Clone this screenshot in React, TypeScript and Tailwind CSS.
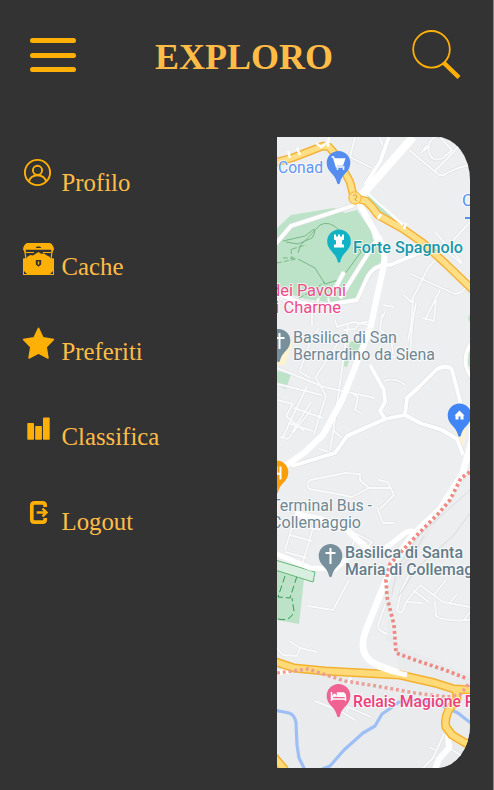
import React from "react";

const ACCENT = "#ffb006";

function ProfileIcon() {
  return (
    <svg viewBox="22 157 32 32" className="size-8" fill="none" stroke={ACCENT} strokeWidth="1.900">
      <circle cx="37.500" cy="172.500" r="12.600" />
      <circle cx="37.500" cy="170.300" r="4.600" />
      <path d="M29 181.500C29.500 178 33 175.200 37.500 175.200S45.500 178 46 181.500" />
    </svg>
  );
}

function ChestIcon() {
  return (
    <svg viewBox="22 241 32 36" className="h-9 w-8">
      <path fill={ACCENT} d="M27 242H50Q53.500 243.500 54 248.500L52 251.500H25L23 248.500Q23.500 243.500 27 242ZM23 257.500L26 257H51L54 257.500V274H23Z" />
      <path fill="#333" d="M35.500 247L37 245.500H40L41.500 247ZM25.500 248.800H51.500L50.500 257.800H26.500Z" />
      <path fill="none" stroke={ACCENT} strokeWidth="1.200" d="M24.500 248L26 258M52.500 248L51 258M26 251.500H34M43 251.500H51" />
      <path fill={ACCENT} d="M27 258V256L30.500 254L33 254.500L36 252.500L38.500 251L41 252.800L44 252.500L47 254.500L50 256V258Z" />
      <path fill="#333" d="M35.800 259H41.200V263.500L38.500 265.800L35.800 263.500ZM24 273V270L27 273ZM53 273V270L50 273Z" />
      <path fill={ACCENT} d="M37.800 260.500H39.200V263.500H37.800Z" />
    </svg>
  );
}

function StarIcon() {
  return (
    <svg viewBox="22 326 34 34" className="h-[34px] w-[34px]">
      <path fill={ACCENT} stroke={ACCENT} strokeWidth="1.500" strokeLinejoin="round" d="M38.500 328.200L43 337.800L53.500 339.500L46.200 347L48 358L38.500 353L29 358L30.800 347L23.500 339.500L34 337.800Z" />
    </svg>
  );
}

function ChartIcon() {
  return (
    <svg viewBox="22 411 32 32" className="size-8" fill={ACCENT}>
      <rect x="27.300" y="423" width="6.700" height="16.800" rx=".8" />
      <rect x="35.200" y="426" width="6.700" height="13.800" rx=".8" />
      <rect x="43" y="417.500" width="6.700" height="22.300" rx=".8" />
    </svg>
  );
}

function LogoutIcon() {
  return (
    <svg viewBox="22 496 32 32" className="size-8" fill="none" stroke={ACCENT}>
      <path strokeWidth="3.700" d="M45.200 507V505.500Q45.200 502.800 42.500 502.800H34.500Q31.800 502.800 31.800 505.500V519.500Q31.800 522.200 34.500 522.200H42.500Q45.200 522.200 45.200 519.500V518" />
      <path strokeWidth="2.400" d="M36.700 512.500H46.500M42.500 508.500L46.500 512.500L42.500 516.500" />
    </svg>
  );
}

const menu = [
  { label: "Profilo", icon: <ProfileIcon />, offset: "mt-[11px]" },
  { label: "Cache", icon: <ChestIcon />, offset: "mt-[10px]" },
  { label: "Preferiti", icon: <StarIcon />, offset: "mt-[11px]" },
  { label: "Classifica", icon: <ChartIcon />, offset: "mt-[11px]" },
  { label: "Logout", icon: <LogoutIcon />, offset: "mt-[11px]" },
];

const minorRoads = [
  "M277 296L300 312M319 298L312 312L312 325",
  "M319 328L311 340L300 370M335 320L337 327L353 322L369 325M328 298L333 315",
  "M344 330L355 329L360 323L371 321M315 378L342 337M348 325L339 390L334 426L330 450M277 368L324 387L375 398",
  "M316 378L326 396L322 408L314 434M277 384L322 395M299 371L310 378",
  "M277 400L293 404L286 416L304 431M294 408L323 418M288 423L313 431M353 394L358 397L355 410L361 413",
  "M307 386L283 437M311 402L292 432M280 437L288 439L311 410",
  "M355 137L350 157L372 168",
  "M379 137L384 148M382 314L380 330L391 337L393 353",
  "M389 357L410 357L412 325L416 303M385 312L382 318",
  "M409 150L438 174Q442 177 447 173L458 168L470 165M421 153L427 145M434 172L462 143M429 146L424 151",
  "M435 137Q427 142 429 152Q432 163 443 158L452 150L440 137",
  "M411 274L455 294L462 292L470 282M428 268L411 302L404 295",
  "M413 300L411 325L408 341M428 268L470 222",
  "M440 290L430 310L425 320M436 300L434 321L423 318",
  "M438 244L462 264M435 232L462 262",
  "M383 305L394 307M384 381Q396 377 405 385",
  "M307 484L310 480L335 475L345 473L360 474L360 480L369 488L352 497L332 493L309 489L307 484M378 480L388 482L394 495L380 509M369 488L390 488",
  "M333 430L343 439M319 449L329 452",
  "M285 550L293 524L320 530M285 552L307 558M290 535L312 541M313 528L303 562",
  "M355 534L353 544L341 566M355 533L372 542L363 554M377 507L383 523L394 523",
  "M413 567L401 591L397 610Q402 618 406 602L420 585M420 585L443 602L470 607M407 602L422 603",
  "M434 595L446 580M435 602L436 616Q446 622 470 620M449 604L457 594M413 590L430 603M464 620L470 612",
  "M277 648L283 655L297 656L300 648L317 652M300 648L289 641",
  "M349 580L333 610L308 606M385 605L378 625Q378 632 388 634",
  "M350 684L351 678M315 701L340 711L355 720M347 712L348 707L371 717M351 675L348 684",
  "M444 734L433 758L423 768M429 747L435 750M449 748L462 756",
];

const mainRoads = [
  "M272 248L291 226L352 206L360 198M371 222L376 241L340 298M344 272L331 296",
  "M277 294L300 302L320 306L357 300L367 278Q374 264 390 265L412 256L430 249",
  "M365 185L380 162L389 137",
  "M292 466L335 453L347 436L385 419L405 415L420 423L442 430L457 439L463 455",
  "M385 419L380 411L385 402L384 390L370 365",
  "M405 415L407 398L419 387L437 369Q448 364 452 370L461 405",
  "M482 335Q463 345 466 366Q468 376 480 386",
];

interface PinProps {
  x: number;
  y: number;
  color: string;
  children?: React.ReactNode;
}

function Pin({ x, y, color, children }: PinProps) {
  return (
    <g transform={`translate(${x} ${y})`}>
      <path d="M0 -12A11.800 11.800 0 0 1 11.800 0C11.800 9 3 11 1.400 20Q0 22.500 -1.400 20C-3 11 -11.800 9 -11.800 0A11.800 11.800 0 0 1 0 -12Z" fill={color} />
      {children}
    </g>
  );
}

interface LabelProps {
  x: number;
  y: number;
  width: number;
  color: string;
  weight?: string;
  children: string;
}

function Label({ x, y, width, color, weight = "font-normal", children }: LabelProps) {
  return (
    <text x={x} y={y} textLength={width} lengthAdjust="spacingAndGlyphs" fill={color} stroke="#ffffff" strokeOpacity=".7" strokeWidth="2" strokeLinejoin="round" paintOrder="stroke" className={`text-[16px] ${weight}`}>
      {children}
    </text>
  );
}

const yellowRoads = [
  "M273 163L292 158L323 146L329 147L335 154L350 182L354 198M354 198L366 201L372 207L378 215L403 229L423 243L446 264L473 290",
];

function CityMap() {
  return (
    <svg viewBox="277 137 193 631" className="block h-[631px] w-[193px] font-['Roboto',sans-serif]" fill="none">
      <rect x="277" y="137" width="193" height="631" fill="#edeef0" />
      <path d="M470 472L423 520L397 570L385 640L470 675V768H277V665L400 674L385 600Z" fill="#e9ebed" />
      <g fill="#bce2c7">
        <path d="M277 228L291 215L334 208L345 213L357 210L384 250Q384 264 370 271L358 299L337 303L305 299L277 290Z" />
        <path d="M350 342L362 339L364 350L350 357L347 367L343 366ZM277 371L291 374L286 389L277 385Z" />
        <path d="M277 563L306 572L304 579L299 624L277 620ZM308 577L315 579L314 582L307 581Z" />
        <path d="M365 190L380 202L397 220L375 214Z" />
        <path d="M470 347Q463 360 470 367ZM470 314L468 318L470 323Z" />
      </g>
      <path d="M277 345L293 343L285 365L277 365ZM457 430L466 427L464 446L455 437Z" fill="#fdf2d2" />

      <g stroke="#79b886" strokeWidth="1">
        <path d="M298 253L300 246L320 225Q329 220 339 230M298 259L315 268L325 284L341 279L361 252L354 240" />
        <path d="M283 241L305 236L314 229Q316 233 312 238L298 244L286 242" />
        <path d="M292 249L306 245M295 258L281 258M277 263L296 259M291 249L292 259" strokeDasharray="5 2" />
        <path d="M299 298L310 292L325 282" strokeDasharray="5 2" />
        <path d="M285 576L278 597L290 598L297 576M278 619Q291 622 294 611L292 598" stroke="#379b55" strokeDasharray="7 3" />
      </g>
      <path d="M272 559L315 572L313 582L272 569Z" fill="#d8efdf" stroke="#65b878" strokeWidth="1" />

      <g stroke="#dfe1e4" strokeWidth="3.200" strokeLinejoin="round">
        {minorRoads.map((d) => <path key={d} d={d} />)}
      </g>
      <g stroke="#f9fafb" strokeWidth="1.900" strokeLinejoin="round">
        {minorRoads.map((d) => <path key={d} d={d} />)}
      </g>
      <g stroke="#e0e2e4" strokeWidth="5" strokeLinejoin="round">
        {mainRoads.map((d) => <path key={d} d={d} />)}
      </g>
      <g stroke="#fff" strokeWidth="3.800" strokeLinejoin="round">
        {mainRoads.map((d) => <path key={d} d={d} />)}
      </g>
      <g stroke="#fff" strokeLinejoin="round">
        <path strokeWidth="8" d="M359 198L377 178L413 137" />
        <path strokeWidth="6" d="M357 199L376 234Q386 246 384 265L376 301L371 326L354 370L342 400L323 435L305 452L277 472" />
        <path strokeWidth="5" d="M277 554L310 568L335 569L349 557" />
        <path strokeWidth="6" d="M295 514L323 520L345 528L372 553" />
        <path strokeWidth="5" d="M380 552L391 544L405 533Q413 528 418 536" />
        <path strokeWidth="6.500" d="M472 405V440L462 475L440 509L413 535L395 560L382 590L366 630Q356 656 378 665L407 676" />
        <path strokeWidth="5" d="M277 673L290 671" />
        <path strokeWidth="6" d="M448 734L449 748L439 759L435 770" />
      </g>
      <g stroke="#dadcdf" strokeWidth="1">
        <path d="M470 490L440 517L420 534L397 568L392 594M470 513L454 535L418 567L398 597M398 569L413 555L424 536" />
      </g>

      <path stroke="#9dbff5" strokeWidth="3.200" strokeLinejoin="round" d="M274 710L289 713Q295 715 296 723L297 745L299 758L305 770M320 770L330 766L344 750L363 733L375 726L382 714L388 710L399 702L419 700L443 706L458 713L472 724" />

      <g strokeLinejoin="round">
        {yellowRoads.map((d) => <path key={d} d={d} stroke="#f3b33c" strokeWidth="8.500" />)}
        {yellowRoads.map((d) => <path key={d} d={d} stroke="#ffdf86" strokeWidth="5.500" />)}
        <path d="M273 661L294 668L325 671L400 675L435 683L454 689L475 690M456 688L457 700Q443 713 446 727L452 735L472 747M274 757L285 770" stroke="#f4b131" strokeWidth="9" />
        <path d="M273 661L294 668L325 671L400 675L435 683L454 689L475 690M456 688L457 700Q443 713 446 727L452 735L472 747M274 757L285 770" stroke="#ffda79" strokeWidth="6" />
        <circle cx="355" cy="198" r="6.200" fill="#ffdf86" stroke="#f8b42a" />
        <path d="M353 196Q356 193 357 197Q353 199 357 201" stroke="#d99a38" />
        <path d="M381 214L378 219M404 229L406 223" stroke="#fff" strokeWidth="2.500" />
        <path d="M378 667L390 671L407 675" stroke="#fff" strokeWidth="5" />
      </g>
      <path d="M365 191L403 225" stroke="#fff" strokeWidth="2.500" />
      <path d="M290 158L288 151M300 155L297 148M316 143L321 147L328 142M328 147L329 137" stroke="#fff" strokeWidth="2.300" />
      <path d="M470 472L461 478L450 500L438 514L421 531L402 551L390 564L386 580L387 597L394 625L396 653L415 660L445 670L468 679" stroke="#ed8a84" strokeWidth="3.700" strokeDasharray="3 2.800" />
      <path d="M277 673L308 669L345 681L382 687L415 693L447 697L460 695L470 682" stroke="#eaa097" strokeWidth="3.500" strokeDasharray="3 2.800" />

      <Pin x={338.500} y={163} color="#548cf0">
        <path d="M-7 -6H-5L-2 4H6M-4 -4H6L4 2H-3" stroke="#fff" strokeWidth="1.500" />
        <path d="M-4 -4H6L4 2H-3Z" fill="#fff" />
        <circle cx="-1" cy="6" r="1" fill="#fff" />
        <circle cx="5" cy="6" r="1" fill="#fff" />
      </Pin>
      <Pin x={339} y={241.500} color="#12b2c5">
        <path d="M-5 -7H-3V-5H-1V-7H1V-5H3V-7H5V-2L3 -1V3H5V6H-5V3H-3V-1L-5 -2Z" fill="#fff" />
      </Pin>
      <Pin x={278.500} y={341} color="#78909c">
        <path d="M1 -8V8M-4 -3H6" stroke="#fff" strokeWidth="2" />
      </Pin>
      <Pin x={459.500} y={415.500} color="#4285f4">
        <path d="M-5 0L0 -5L5 0H4V4H1V1H-1V4H-4V0Z" fill="#fff" />
      </Pin>
      <Pin x={276.500} y={472.500} color="#f99d0b">
        <path d="M0 -6V0Q0 2 4 1M4 -6V7" stroke="#fff" strokeWidth="2" />
      </Pin>
      <Pin x={330.500} y={556} color="#78909c">
        <path d="M0 -8V8M-5 -3H5" stroke="#fff" strokeWidth="2" />
      </Pin>
      <Pin x={338.500} y={696} color="#f06292">
        <path d="M-7 -4V5M-7 3H7V5M-1 0V-3H5Q7 -2 7 1V3H-6V0Z" stroke="#fff" strokeWidth="1.500" />
        <path d="M-1 -3H5Q7 -2 7 1H-1Z" fill="#fff" />
        <circle cx="-4" cy="-1" r="1.500" fill="#fff" />
      </Pin>
      <Label x={278} y={173} width={45} color="#5f97f2">Conad</Label>
      <Label x={353} y={252.500} width={110} color="#1998aa" weight="font-medium">Forte Spagnolo</Label>
      <Label x={271} y={295.500} width={75} color="#ec4c8b">dei Pavoni</Label>
      <Label x={266} y={312.500} width={75} color="#ec4c8b">di Charme</Label>
      <Label x={293} y={343} width={104} color="#6f8793">Basilica di San</Label>
      <Label x={293} y={360} width={142} color="#6f8793">Bernardino da Siena</Label>
      <Label x={271} y={511} width={101} color="#6f8793">Terminal Bus -</Label>
      <Label x={271} y={528} width={90} color="#6f8793">Collemaggio</Label>
      <Label x={345} y={558} width={118} color="#647c89" weight="font-medium">Basilica di Santa</Label>
      <Label x={345} y={575} width={150} color="#647c89" weight="font-medium">Maria di Collemaggio</Label>
      <Label x={353} y={707} width={160} color="#ec407a" weight="font-medium">Relais Magione Papale</Label>
      <Label x={462} y={206} width={40} color="#5991f3">Coop</Label>
      <path d="M465 218H470" stroke="#5991f3" strokeWidth="2" />
    </svg>
  );
}

export default function App() {
  return (
    <div className="h-[790px] w-[494px] overflow-hidden border-r border-[#888] bg-[#333] font-['Liberation_Serif','Times_New_Roman',serif] text-[#ffbd48]">
      <header className="flex h-[137px] items-start pl-[30px] pt-[28px]">
        <button aria-label="Menu" className="mt-[10px] flex w-[46px] flex-col gap-[9.500px]">
          <span className="h-[5px] rounded-full bg-[#ffb006]" />
          <span className="h-[5px] rounded-full bg-[#ffb006]" />
          <span className="h-[5px] rounded-full bg-[#ffb006]" />
        </button>
        <h1 className="ml-[79px] mt-[8px] w-[179px] text-[36px] font-bold leading-[42px]">EXPLORO</h1>
        <button aria-label="Cerca" className="ml-[76px]">
          <svg viewBox="410 28 54 54" className="size-[54px]" fill="none" stroke={ACCENT}>
            <circle cx="431.500" cy="49.300" r="18.300" strokeWidth="1.800" />
            <path d="M443.500 62.500L459 77.500" strokeWidth="4.500" />
          </svg>
        </button>
      </header>
      <div className="flex">
        <nav className="flex w-[277px] shrink-0 flex-col pl-[22px] pt-[20px]">
          {menu.map(({ label, icon, offset }) => (
            <a key={label} className="flex h-[84.700px] items-start">
              <span className="flex w-[39.500px] shrink-0">{icon}</span>
              <span className={`text-[24.800px] leading-[30px] ${offset}`}>{label}</span>
            </a>
          ))}
        </nav>
        <main className="h-[631px] w-[193px] overflow-hidden rounded-r-[33px_43px]">
          <CityMap />
        </main>
      </div>
    </div>
  );
}
